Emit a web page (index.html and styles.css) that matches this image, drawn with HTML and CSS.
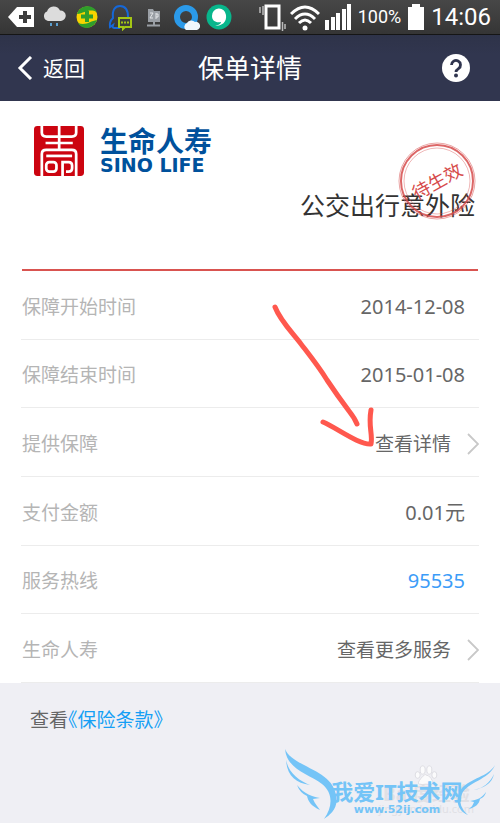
FILE: index.html
```
<!DOCTYPE html>
<html lang="zh-CN">
<head>
    <meta charset="UTF-8">
    <meta name="viewport" content="width=device-width, initial-scale=1.0">
    <title>保单详情</title>
    <link rel="stylesheet" href="styles.css">
</head>
<body>

    <div class="status-bar">
        <div class="status-apps">
            <svg width="28" height="28" viewBox="0 0 28 28"><path d="M1 14L10 4H27V24H10Z" fill="#fff"/><path d="M18 8V20M12 14H24" stroke="#3d3d3d" stroke-width="4"/></svg>
            <svg width="28" height="28" viewBox="0 0 28 28"><path d="M8 18a5 5 0 0 1-1-9.500a7 7 0 0 1 13-1a5 5 0 0 1 1 10.500Z" fill="#dcdcdc"/><path d="M11 20v3M17 20v3" stroke="#5b9fd0" stroke-width="2"/></svg>
            <svg width="28" height="28" viewBox="0 0 28 28"><circle cx="14" cy="14" r="10.500" fill="#f7d400"/><path d="M4 11C7 1 20 1 24 9C16 5 12 10 4 11ZM24 17C20 27 9 27 5 20C13 23 17 18 24 17Z" fill="#2f9e2b"/><path d="M14 8v11M8 13.500h12" stroke="#2f9e2b" stroke-width="4"/></svg>
            <svg width="28" height="28" viewBox="0 0 28 28"><path d="M14 25H8q-2 0-1-3l-3 2q-1-5 3-9C6 7 9 3 14 3s8 4 8 11" fill="none" stroke="#1668d8" stroke-width="2"/><path d="M13 15h12v9h-6l-2 2v-2h-4z" fill="#3d3d3d" stroke="#a4c614" stroke-width="2"/><path d="M15 19.500h8" stroke="#a4c614" stroke-width="2" stroke-dasharray="2 1"/></svg>
            <svg width="28" height="28" viewBox="0 0 28 28"><path d="M9 6h5l1 2h6v11H9z" fill="#9a9fa5"/><path d="M11 10h3l-3 5h3M17 10v6M17 11h2v3h-2" fill="none" stroke="#e3e5e8"/><path d="M15 19v4M8 22.500h13" stroke="#9a9fa5" stroke-width="2"/></svg>
            <svg width="28" height="28" viewBox="0 0 28 28"><circle cx="14" cy="14" r="9" fill="none" stroke="#2b9ae9" stroke-width="6"/><path d="M14 27a4 4 0 0 1 1-7a5 5 0 0 1 8-1a4 4 0 0 1 2 8Z" fill="#f0f7fc"/></svg>
            <svg width="28" height="28" viewBox="0 0 28 28"><circle cx="14" cy="14" r="12.500" fill="#08b68c"/><path d="M10 23c5-1 6-3 6-4c-5 1-9-1-9-6a7 7 0 0 1 14-1c1 7-4 11-11 11Z" fill="#fff"/></svg>
        </div>
        <div class="status-system">
            <svg width="27" height="28" viewBox="0 0 27 28"><path d="M7 3h13v22H7z" fill="none" stroke="#fff" stroke-width="3"/><path d="M1 4v6M4 3v9M23.500 19v9M26 21v5" stroke="#bbb" stroke-width="1.500"/></svg>
            <svg width="30" height="28" viewBox="0 0 30 28"><path d="M1 11Q15-3 29 11M5 16Q15 6 25 16M9 20Q15 14 21 20" fill="none" stroke="#fff" stroke-width="3"/><circle cx="15" cy="25" r="2.500" fill="#fff"/></svg>
            <svg width="28" height="28" viewBox="0 0 28 28"><path d="M1 17h4v10H1zM7 14h4v13H7zM12 10h4v17h-4zM18 6h4v21h-4zM23 1h4v26h-4z" fill="#fff"/></svg>
            <span class="battery-level">100%</span>
            <svg width="18" height="28" viewBox="0 0 18 28"><path d="M5 1h8v3h4v23H1V4h4z" fill="#fff"/></svg>
            <span class="clock">14:06</span>
        </div>
    </div>

    <header class="nav-bar">
        <button class="back-btn" type="button">
            <svg width="16" height="24" viewBox="0 0 16 24"><path d="M14 1L3 12L14 23" fill="none" stroke="#fff" stroke-width="3"/></svg>
            返回
        </button>
        <h1 class="nav-title">保单详情</h1>
        <button class="help-btn" type="button" aria-label="帮助">
            <svg width="28" height="28" viewBox="0 0 28 28"><circle cx="14" cy="14" r="14" fill="#fff"/><path d="M9.500 11a4.500 4.500 0 1 1 7 3.700q-2.500 1.600-2.500 3.300" fill="none" stroke="#30354f" stroke-width="2.800"/><circle cx="14" cy="21.500" r="2" fill="#30354f"/></svg>
        </button>
    </header>

    <main class="policy">
        <section class="product">
            <div class="brand">
                <svg class="seal" width="50" height="50" viewBox="0 0 147 147">
                    <rect width="147" height="147" rx="10" fill="#cc0410"/>
                    <g fill="none" stroke="#fff" stroke-width="8">
                        <path d="M23 0V20Q23 31 36 31H111Q124 31 124 20V0"/>
                        <path d="M74 0V70M34 50H114"/>
                        <path d="M23 147V82Q23 70 36 70H111Q124 70 124 82V147"/>
                        <path d="M36 88H112"/>
                        <rect x="36" y="106" width="30" height="28" rx="9"/>
                        <path d="M84 147V106H102Q112 106 112 116V124Q112 134 102 134H94"/>
                    </g>
                </svg>
                <div class="brand-text">
                    <span class="brand-cn">生命人寿</span>
                    <span class="brand-en">SINO LIFE</span>
                </div>
            </div>
            <h2 class="product-name">公交出行意外险</h2>
            <div class="stamp">
                <svg class="stamp-ring" width="78" height="78" viewBox="0 0 78 78" fill="none" stroke="#d64b4b">
                    <circle cx="39" cy="39" r="38" opacity=".5"/>
                    <circle cx="39" cy="39" r="36" stroke-width="2" opacity=".85"/>
                    <circle cx="39" cy="39" r="33" opacity=".4"/>
                </svg>
                <span class="stamp-text">待生效</span>
            </div>
        </section>

        <dl class="details">
            <div class="row">
                <dt>保障开始时间</dt>
                <dd>2014-12-08</dd>
            </div>
            <div class="row">
                <dt>保障结束时间</dt>
                <dd>2015-01-08</dd>
            </div>
            <div class="row">
                <dt>提供保障</dt>
                <dd class="more"><a href="#">查看详情<svg width="12" height="22" viewBox="0 0 12 22"><path d="M1 1L11 11L1 21" fill="none" stroke="#c8c8c8" stroke-width="1.800"/></svg></a></dd>
            </div>
            <div class="row">
                <dt>支付金额</dt>
                <dd>0.01元</dd>
            </div>
            <div class="row">
                <dt>服务热线</dt>
                <dd><a class="hotline" href="tel:95535">95535</a></dd>
            </div>
            <div class="row">
                <dt>生命人寿</dt>
                <dd class="more"><a href="#">查看更多服务<svg width="12" height="22" viewBox="0 0 12 22"><path d="M1 1L11 11L1 21" fill="none" stroke="#c8c8c8" stroke-width="1.800"/></svg></a></dd>
            </div>
            <svg class="arrow" width="110" height="150" viewBox="0 0 110 150" fill="none" stroke="#ff584e" stroke-width="5" stroke-linecap="round" stroke-linejoin="round">
                <path d="M6 6C11 19 21 29 32 43C42 56 50 66 58 79C66 91 74 102 80 110C84 115 86 118 88 123"/>
                <path d="M54 121C68 127 90 144 102 143C104 133 99 126 102 109"/>
            </svg>
        </dl>
    </main>

    <footer class="terms">
        <p>查看<a href="#">《保险条款》</a></p>
        <div class="watermark-baidu">
            <svg width="24" height="20" viewBox="0 0 28 24" fill="#fbfbfc" stroke="#d9d9de"><ellipse cx="4" cy="12" rx="3" ry="4"/><ellipse cx="10" cy="6" rx="3" ry="5"/><ellipse cx="18" cy="6" rx="3" ry="5"/><ellipse cx="24" cy="12" rx="3" ry="4"/><path d="M14 12q3 0 6 4t2 7q-3 1-8 0q-5 1-8 0t2-7t6-4z"/></svg>
            <span class="baidu-name">Bai度经验</span>
            <span class="baidu-url">jingyan.baidu.com</span>
        </div>
        <div class="watermark">
            <svg class="wings" width="212" height="76" viewBox="0 0 212 76" fill="#74c4f7">
                <path d="M1 2C8 20 48 22 52 48C55 61 46 68 40 72C49 59 49 46 38 37C25 27 3 23 1 2Z"/>
                <path d="M2 13C5 27 16 34 26 38C12 36 3 29 2 13Z"/>
                <path d="M13 38C20 47 29 50 36 51L29 52C31 57 34 60 36 63C27 59 24 54 23 49Q16 46 13 38Z"/>
                <path d="M211 18C205 33 183 35 178 47C174 55 178 63 184 68C172 63 171 50 178 41C187 31 204 30 211 18Z"/>
                <path d="M210 27C208 37 199 41 190 43C199 41 206 36 210 27Z"/>
                <path d="M202 45C198 51 193 53 186 54L190 55C188 60 187 60 185 62C192 60 195 57 196 52Q201 50 202 45Z"/>
            </svg>
            <span class="watermark-name">我爱IT技术网</span>
            <span class="watermark-url">www.52ij.com</span>
        </div>
    </footer>

</body>
</html>
```
FILE: styles.css
```
* {
    box-sizing: border-box;
}

body {
    display: flex;
    flex-direction: column;
    min-height: 100vh;
    margin: 0;
    background: #fff;
    color: #666;
    font-family: "Noto Sans", "Noto Sans CJK SC", sans-serif;
    font-size: 19px;
    line-height: 30px;
}

svg {
    display: block;
    flex: none;
}

a {
    color: inherit;
    text-decoration: none;
}

button {
    padding: 0;
    border: 0;
    background: none;
    color: inherit;
    font: inherit;
}

/* phone status bar */
.status-bar {
    display: flex;
    justify-content: space-between;
    align-items: center;
    height: 35px;
    padding: 0 9px 0 7px;
    border-bottom: 1px solid #151515;
    background: linear-gradient(#474747, #353535);
    color: #fff;
    font-family: Roboto, sans-serif;
}

.status-apps {
    display: flex;
    gap: 5px;
}

.status-system {
    display: flex;
    align-items: center;
    gap: 4px;
}

.battery-level {
    margin: 0 2px;
    font-size: 18px;
}

.clock {
    margin-left: 2px;
    font-size: 24px;
}

/* title bar */
.nav-bar {
    display: grid;
    grid-template-columns: 1fr auto 1fr;
    align-items: center;
    height: 66px;
    padding: 0 17px;
    background: linear-gradient(#2e3349, #31364f 30%, #31364f);
    color: #fff;
}

.back-btn {
    display: flex;
    align-items: center;
    gap: 10px;
    font-size: 21px;
}

.nav-title {
    margin: 0;
    font-size: 26px;
    font-weight: 400;
}

.help-btn {
    justify-self: end;
    margin-right: 13px;
}

/* product head */
.product {
    position: relative;
    margin: 0 22px;
    padding: 25px 3px 49px 12px;
    border-bottom: 2px solid #d95450;
}

.brand {
    display: flex;
    align-items: center;
    gap: 16px;
}

.brand-text {
    display: flex;
    flex-direction: column;
    color: #00519c;
}

.brand-cn {
    font-size: 28px;
    font-weight: 700;
    line-height: 28px;
}

.brand-en {
    font-family: "DejaVu Sans", sans-serif;
    font-size: 19px;
    font-weight: 700;
    line-height: 20px;
}

.product-name {
    margin: 14px 0 0;
    color: #333;
    font-size: 25px;
    font-weight: 400;
    text-align: right;
}

.stamp {
    display: flex;
    align-items: center;
    justify-content: center;
    position: absolute;
    top: 41px;
    right: 2px;
    width: 78px;
    height: 78px;
    color: #d64b4b;
}

.stamp-ring {
    position: absolute;
    inset: 0;
}

.stamp-text {
    font-size: 18px;
    transform: rotate(-29deg);
}

/* policy details */
.details {
    display: grid;
    grid-auto-rows: 1fr;
    position: relative;
    height: 412px;
    margin: 0 21px;
}

.row {
    display: flex;
    justify-content: space-between;
    align-items: center;
    padding-top: 4px;
    border-bottom: 1px solid #ececec;
}

.row dt {
    padding-left: 1px;
    color: #b5b5b5;
}

.row dd {
    margin: 0;
    padding-right: 14px;
    font-size: 20px;
}

.row .more {
    padding-right: 0;
    font-size: 19px;
}

.more a {
    display: flex;
    align-items: center;
    gap: 16px;
}

.hotline {
    color: #3c9cf8;
}

.arrow {
    position: absolute;
    top: 30px;
    right: 100px;
}

/* terms */
.terms {
    flex: 1;
    position: relative;
    padding: 22px 30px;
    background: #efeff4;
}

.terms p {
    margin: 0;
}

.terms a {
    color: #159ff5;
    font-feature-settings: "halt";
}

.watermark {
    display: flex;
    flex-direction: column;
    align-items: center;
    position: absolute;
    right: 4px;
    bottom: 0;
    width: 212px;
    padding: 0 0 6px 14px;
    color: #74c4f7;
    font-weight: 700;
}

.wings {
    position: absolute;
    right: 0;
    bottom: 0;
}

.watermark-name {
    font-size: 22px;
    font-weight: 700;
    line-height: 24px;
}

.watermark-url {
    font-family: "DejaVu Sans", sans-serif;
    font-size: 11px;
    line-height: 14px;
}

.watermark-baidu {
    display: flex;
    flex-direction: column;
    align-items: center;
    position: absolute;
    right: 26px;
    bottom: 8px;
    color: #e0e0e5;
}

.baidu-name {
    font-size: 19px;
    font-weight: 700;
    line-height: 18px;
}

.baidu-url {
    font-size: 11px;
    line-height: 12px;
}
```
